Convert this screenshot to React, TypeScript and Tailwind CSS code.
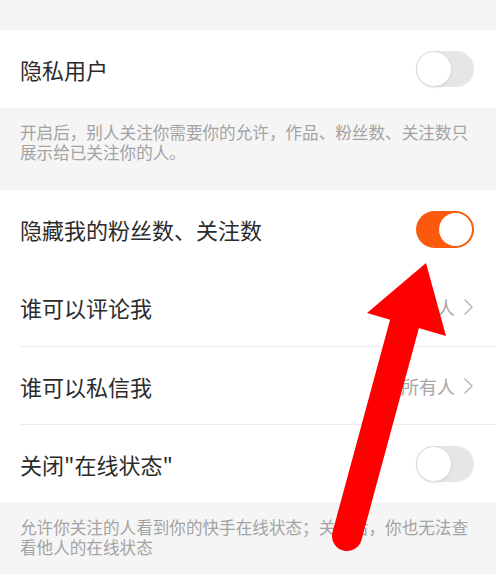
import React from "react";

const font = { fontFamily: '"Noto Sans CJK SC", "Noto Sans", sans-serif' };

function Toggle({ on }: { on: boolean }) {
  if (on) {
    return (
      <div className="w-[58px] h-[37px] rounded-full bg-[#fb5a0e] flex items-center justify-end pr-[2px] shrink-0">
        <div className="w-[33px] h-[33px] rounded-full bg-white" />
      </div>
    );
  }
  return (
    <div className="w-[58px] h-[36px] rounded-full bg-[#e6e6e6] flex items-center justify-start shrink-0">
      <div className="w-[36px] h-[36px] rounded-full bg-white border border-[#dcdcdc] shadow-[0_1px_2px_rgba(0,0,0,0.08)]" />
    </div>
  );
}

function Chevron() {
  return (
    <svg width="11" height="18" viewBox="0 0 11 18" className="ml-[8px]">
      <path d="M2 2 L9 9 L2 16" fill="none" stroke="#bdbdbd" strokeWidth="1.6" strokeLinecap="round" strokeLinejoin="round" />
    </svg>
  );
}

function Row({ title, right, divider }: { title: string; right: React.ReactNode; divider?: boolean }) {
  return (
    <div className="pl-[20px]">
      <div className={`h-[78px] flex items-center justify-between pr-[22px] ${divider ? "border-t border-[#ececec]" : ""}`}>
        <span className="text-[22px] text-[#2b2b2b] leading-none">{title}</span>
        {right}
      </div>
    </div>
  );
}

function Value({ text }: { text: string }) {
  return (
    <div className="flex items-center">
      <span className="text-[18px] text-[#a6a6a6] leading-none">{text}</span>
      <Chevron />
    </div>
  );
}

export default function App() {
  return (
    <div className="relative w-[496px] h-[574px] overflow-hidden bg-[#f5f5f5]" style={font}>
      <div className="h-[30px] overflow-hidden px-[20px]">
        <div className="mt-[-19px] text-[16.6px] leading-[20px] text-[#a3a3a3] whitespace-nowrap">
          开启后，你将不会被推荐给可能认识的人
        </div>
      </div>
      <div className="bg-white">
        <Row title="隐私用户" right={<Toggle on={false} />} />
      </div>
      <div className="pt-[14px] pb-[28px] px-[20px] text-[16.6px] leading-[20px] text-[#a3a3a3]">
        开启后，别人关注你需要你的允许，作品、粉丝数、关注数只展示给已关注你的人。
      </div>
      <div className="bg-white">
        <Row title="隐藏我的粉丝数、关注数" right={<Toggle on={true} />} />
        <Row title="谁可以评论我" right={<Value text="所有人" />} />
        <Row title="谁可以私信我" right={<Value text="所有人" />} divider />
        <Row title='关闭"在线状态"' right={<Toggle on={false} />} divider />
      </div>
      <div className="pt-[15px] px-[20px] text-[16.6px] leading-[20px] text-[#a3a3a3]">
        允许你关注的人看到你的快手在线状态；关闭后，你也无法查看他人的在线状态
      </div>
      <svg className="absolute left-0 top-0 pointer-events-none" width="496" height="574" viewBox="0 0 496 574">
        <line x1="347" y1="536" x2="405" y2="322" stroke="#ff0000" strokeWidth="30" strokeLinecap="round" />
        <polygon points="426,263 446,336 367,313" fill="#ff0000" />
      </svg>
    </div>
  );
}
